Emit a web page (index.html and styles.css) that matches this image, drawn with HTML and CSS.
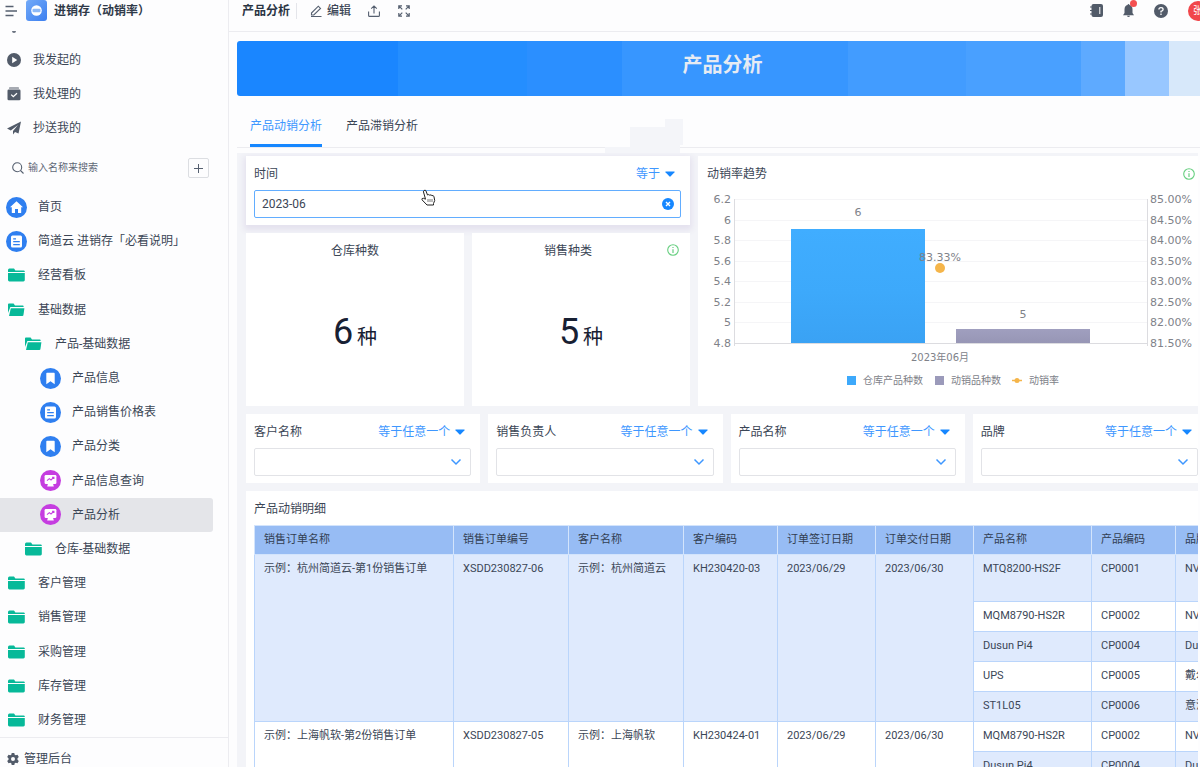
FILE: index.html
```html
<!DOCTYPE html>
<html lang="zh-CN">
<head>
<meta charset="utf-8">
<title>产品分析</title>
<link rel="stylesheet" href="styles.css">
</head>
<body>
<svg class="defs" aria-hidden="true">
  <symbol id="folder" viewBox="0 0 17 14"><path d="M0 2.2Q0 .6 1.4.6H6L7.4 2.4H15.6Q16.8 2.4 16.8 3.6V4H0Z"/><path d="M0 5H16.8V12Q16.8 13.4 15.4 13.4H1.4Q0 13.4 0 12Z"/></symbol>
  <symbol id="folder-open" viewBox="0 0 17 14"><path d="M0 1.4Q0 .6.9.6H5.6L7 2.4H14.8Q15.6 2.4 15.6 3.3V4H2.4L0 10Z"/><path d="M2.8 5.2H16.4L15.4 12.2Q15.2 13 14.4 13H1Z"/></symbol>
  <symbol id="bookmark" viewBox="0 0 21 21"><circle cx="10.500" cy="10.500" r="10.500"/><path fill="#fff" d="M6.300 5.500Q6.300 4.800 7 4.800H14Q14.700 4.800 14.700 5.500V16.300L10.500 13.200L6.300 16.300Z"/></symbol>
  <symbol id="doc" viewBox="0 0 21 21"><circle cx="10.500" cy="10.500" r="10.500"/><rect x="5" y="4.500" width="11" height="12" rx="1.500" fill="#fff"/><path stroke="#2f7ff0" stroke-width="1.200" d="M7.200 7.800H10M7.200 10.700H13.800M7.200 13.600H13.800"/></symbol>
  <symbol id="board" viewBox="0 0 21 21"><circle cx="10.500" cy="10.500" r="10.500"/><rect x="4.600" y="5" width="11.800" height="9" rx="1.300" fill="#fff"/><path fill="#fff" d="M8 13.500H13L13.800 16.500H7.200Z"/><path fill="none" stroke="#c53de0" stroke-width="1.100" d="M7 10.600L9.300 8.600L11 10L13.500 7.600M12 7.300H13.900V9"/></symbol>
  <symbol id="home" viewBox="0 0 21 21"><circle cx="10.500" cy="10.500" r="10.500"/><path fill="#fff" d="M10.500 4.300L17 10.300H15.200V15.500Q15.200 16 14.600 16H12V12H9V16H6.400Q5.800 16 5.800 15.500V10.300H4Z"/></symbol>
  <symbol id="chevron" viewBox="0 0 12 8"><path fill="none" stroke="#3e97ff" stroke-width="1.500" d="M1.500 1.500L6 6L10.500 1.500"/></symbol>
  <symbol id="caret" viewBox="0 0 10 6"><path fill="#1687ff" d="M.8.500H9.200Q10 .500 9.500 1.200L5.700 5.300Q5 6 4.300 5.300L.5 1.200Q0 .500.8.500Z"/></symbol>
  <symbol id="info" viewBox="0 0 12 12"><circle cx="6" cy="6" r="5.300" fill="none" stroke="#67cf80" stroke-width="1.100"/><path fill="none" stroke="#67cf80" stroke-width="1.200" d="M6 5.200V9M6 2.900V4.100"/></symbol>
</svg>
<div class="app">
  <aside class="sidebar">
    <header class="brand">
      <button class="icon-btn" aria-label="菜单"><svg width="13" height="12" viewBox="0 0 13 12" fill="none" stroke="#566070" stroke-width="1.400"><path d="M.5 1.500H8.500M.5 6H12M.5 10.500H8.500"/></svg></button>
      <svg class="brand-logo" width="21" height="21" viewBox="0 0 21 21"><defs><linearGradient id="lg" x1="0" y1="0" x2="1" y2="1"><stop offset="0" stop-color="#73aaf8"/><stop offset="1" stop-color="#3c7ff0"/></linearGradient></defs><rect width="21" height="21" rx="3" fill="url(#lg)"/><circle cx="10.500" cy="10.500" r="5.300" fill="#fff"/><rect x="6.500" y="8.800" width="8" height="3.400" rx="1" fill="#8db9f7"/></svg>
      <strong>进销存（动销率）</strong>
    </header>
    <nav class="quick">
      <span class="peek"></span>
      <a href="#"><svg width="14" height="14" viewBox="0 0 14 14"><circle cx="7" cy="7" r="7" fill="#525b69"/><path fill="#fff" d="M5.200 3.800L10.200 7L5.200 10.200Z"/></svg>我发起的</a>
      <a href="#"><svg width="14" height="14" viewBox="0 0 14 14"><path fill="#525b69" d="M2.500.500H11.500Q12 .500 12 1.500H2Q2 .500 2.500.500ZM1.800 2.500H12.200Q13.500 2.500 13.500 3.800V12Q13.500 13.300 12.200 13.300H1.800Q.5 13.300.5 12V3.800Q.5 2.500 1.800 2.500Z"/><path fill="none" stroke="#fff" stroke-width="1.300" d="M4.200 7.600L6.300 9.700L10 6.200"/></svg>我处理的</a>
      <a href="#"><svg width="14" height="14" viewBox="0 0 14 14"><path fill="#525b69" d="M14 .5L0 7.500L3.800 9.400L11 4L6 10V13.500L8 11L11.500 12.500Z"/></svg>抄送我的</a>
    </nav>
    <div class="search">
      <svg width="12" height="12" viewBox="0 0 12 12" fill="none" stroke="#566070" stroke-width="1.100"><circle cx="5.200" cy="5.200" r="4.500"/><path d="M8.500 8.500L11.500 11.500"/></svg>
      <input type="text" placeholder="输入名称来搜索" aria-label="搜索">
      <button aria-label="新增"><svg width="11" height="11" viewBox="0 0 11 11" stroke="#566070"><path d="M5.500 1V10M1 5.500H10"/></svg></button>
    </div>
    <nav class="tree">
      <a href="#"><svg class="round blue"><use href="#home"/></svg>首页</a>
      <a href="#"><svg class="round blue"><use href="#doc"/></svg>简道云 进销存「必看说明」</a>
      <a href="#"><svg class="fold"><use href="#folder"/></svg>经营看板</a>
      <a href="#"><svg class="fold"><use href="#folder-open"/></svg>基础数据</a>
      <a href="#" class="l2"><svg class="fold"><use href="#folder-open"/></svg>产品-基础数据</a>
      <a href="#" class="l3"><svg class="round blue"><use href="#bookmark"/></svg>产品信息</a>
      <a href="#" class="l3"><svg class="round blue"><use href="#doc"/></svg>产品销售价格表</a>
      <a href="#" class="l3"><svg class="round blue"><use href="#bookmark"/></svg>产品分类</a>
      <a href="#" class="l3"><svg class="round pink"><use href="#board"/></svg>产品信息查询</a>
      <a href="#" class="l3 current"><svg class="round pink"><use href="#board"/></svg>产品分析</a>
      <a href="#" class="l2"><svg class="fold"><use href="#folder"/></svg>仓库-基础数据</a>
      <a href="#"><svg class="fold"><use href="#folder"/></svg>客户管理</a>
      <a href="#"><svg class="fold"><use href="#folder"/></svg>销售管理</a>
      <a href="#"><svg class="fold"><use href="#folder"/></svg>采购管理</a>
      <a href="#"><svg class="fold"><use href="#folder"/></svg>库存管理</a>
      <a href="#"><svg class="fold"><use href="#folder"/></svg>财务管理</a>
    </nav>
    <footer class="admin"><a href="#"><svg width="12" height="12" viewBox="0 0 12 12"><path fill="#525b69" fill-rule="evenodd" d="M4.700 0H7.300L7.700 1.700L8.800 2.300L10.500 1.800L11.800 4L10.500 5.300V6.700L11.800 8L10.500 10.200L8.800 9.700L7.700 10.300L7.300 12H4.700L4.300 10.300L3.200 9.700L1.500 10.200L.2 8L1.500 6.700V5.300L.2 4L1.500 1.800L3.200 2.300L4.300 1.700ZM6 4A2 2 0 1 0 6 8A2 2 0 1 0 6 4Z"/></svg>管理后台</a></footer>
  </aside>

  <main class="main">
    <header class="topbar">
      <strong>产品分析</strong>
      <button class="edit"><svg width="12" height="12" viewBox="0 0 12 12" fill="none" stroke="#566070" stroke-width="1.100"><path d="M1.500 8L8.300 1.200L10.500 3.400L3.800 10H1.500ZM1 11.500H11.500"/></svg>编辑</button>
      <button class="icon-btn" aria-label="分享"><svg width="12" height="12" viewBox="0 0 12 12" fill="none" stroke="#566070" stroke-width="1.100"><path d="M6 8.500V1M3.200 3.600L6 .9L8.800 3.600M.6 6.500V10.400Q.6 11.400 1.600 11.400H10.400Q11.400 11.400 11.400 10.400V6.500"/></svg></button>
      <button class="icon-btn" aria-label="全屏"><svg width="12" height="12" viewBox="0 0 12 12" fill="none" stroke="#566070" stroke-width="1.200"><path d="M.8 4V.8H4M.8.8L4.300 4.300M8 .8H11.200V4M11.200.8L7.700 4.300M.8 8V11.200H4M.8 11.200L4.300 7.700M8 11.200H11.200V8M11.200 11.200L7.700 7.700"/></svg></button>
      <div class="tools">
        <button class="icon-btn" aria-label="通讯录"><svg width="13" height="13" viewBox="0 0 13 13"><rect x="1.500" width="11.500" height="13" rx="2" fill="#525b69"/><path stroke="#525b69" stroke-width="1.200" d="M0 3H2M0 6.500H2M0 10H2"/><path stroke="#fff" d="M9.800 3V10"/></svg></button>
        <button class="icon-btn bell" aria-label="通知"><svg width="11" height="13" viewBox="0 0 11 13"><path fill="#525b69" d="M5.500 0Q6.300 0 6.500 1Q9.500 1.800 9.500 5.500V9L11 11.300H0L1.500 9V5.500Q1.500 1.800 4.500 1Q4.700 0 5.500 0ZM4 11.800H7Q6.700 13 5.500 13Q4.300 13 4 11.800Z"/></svg><i></i></button>
        <button class="icon-btn" aria-label="帮助"><svg width="14" height="14" viewBox="0 0 14 14"><circle cx="7" cy="7" r="7" fill="#525b69"/><path fill="none" stroke="#fff" stroke-width="1.300" d="M4.900 5.500Q4.900 3.600 7 3.600Q9.100 3.600 9.100 5.400Q9.100 6.500 7 7.300V8.500M7 9.600V11"/></svg></button>
        <span class="avatar">张</span>
      </div>
    </header>
    <div class="page">
      <h1 class="banner">产品分析</h1>
      <div class="tabs">
        <a href="#" class="active">产品动销分析</a>
        <a href="#">产品滞销分析</a>
        <svg class="ghost" width="79" height="34" viewBox="0 0 79 34" fill="#f4f5f9"><path d="M25 8H60V0H78V26H75V34H0V28H25Z"/></svg>
      </div>
      <div class="dash">
        <div class="top-row">
          <div class="left-col">
            <section class="card filter focus">
              <div class="filter-head"><label for="time">时间</label><button>等于<svg width="10" height="6"><use href="#caret"/></svg></button></div>
              <div class="field"><input id="time" type="text" value="2023-06"><svg class="clear" width="12" height="12" viewBox="0 0 12 12"><circle cx="6" cy="6" r="6" fill="#1687ff"/><path stroke="#fff" stroke-width="1.400" d="M4 4L8 8M8 4L4 8"/></svg></div>
              <svg class="cursor" width="15" height="17" viewBox="0 0 15 17"><path fill="#fff" stroke="#222" d="M3 1.500Q4.500.5 5 2L6.500 6Q8 5 8.700 6.200Q10.200 5.300 10.900 6.600Q12.500 6 13 7.800L13.700 11.500L12.500 14.500V16H6L1 10.800Q.5 9 2.500 9.300L4.500 10.200L2.500 3Q2.300 2 3 1.500Z"/><path stroke="#555" stroke-width=".8" d="M7 10V13M9 10V13M11 10V13"/></svg>
            </section>
            <div class="stats">
              <section class="card stat"><h2>仓库种数</h2><p><b>6</b><span>种</span></p></section>
              <section class="card stat"><h2 class="with-info">销售种类</h2><svg class="info" width="12" height="12"><use href="#info"/></svg><p><b>5</b><span>种</span></p></section>
            </div>
          </div>
          <section class="card chart">
            <div class="chart-head"><h2>动销率趋势</h2><svg width="12" height="12"><use href="#info"/></svg></div>
            <svg class="plot" viewBox="0 0 509 220">
              <defs>
                <linearGradient id="b1" x1="0" y1="0" x2="0" y2="1"><stop offset="0" stop-color="#40adff"/><stop offset=".55" stop-color="#3da9fb"/><stop offset="1" stop-color="#3aa2f4"/></linearGradient>
                <linearGradient id="b2" x1="0" y1="0" x2="0" y2="1"><stop offset="0" stop-color="#a09fbf"/><stop offset="1" stop-color="#9796b5"/></linearGradient>
              </defs>
              <path stroke="#f5f5f7" d="M37 13.500H449M37 34.500H449M37 54.500H449M37 75.500H449M37 95.500H449M37 116.500H449M37 136.500H449"/>
              <path fill="none" stroke="#dcdce0" d="M36.500 13V160M449.500 13V160M37 157.500H449"/>
              <rect x="93" y="43" width="134" height="114" fill="url(#b1)"/>
              <rect x="258" y="143" width="134" height="14" fill="url(#b2)"/>
              <circle cx="242" cy="82" r="5" fill="#f5b54a"/>
              <g class="axis end"><text x="33" y="17">6.2</text><text x="33" y="38">6</text><text x="33" y="58">5.8</text><text x="33" y="79">5.6</text><text x="33" y="99">5.4</text><text x="33" y="120">5.2</text><text x="33" y="140">5</text><text x="33" y="161">4.8</text></g>
              <g class="axis"><text x="452" y="17">85.00%</text><text x="452" y="38">84.50%</text><text x="452" y="58">84.00%</text><text x="452" y="79">83.50%</text><text x="452" y="99">83.00%</text><text x="452" y="120">82.50%</text><text x="452" y="140">82.00%</text><text x="452" y="161">81.50%</text></g>
              <g class="axis mid"><text x="160" y="30">6</text><text x="325" y="132">5</text><text x="242" y="75">83.33%</text><text class="small" x="242" y="175">2023年06月</text></g>
              <g class="axis"><rect x="149" y="190" width="9" height="9" fill="#3da9fb"/><text class="small" x="165" y="198">仓库产品种数</text><rect x="237" y="190" width="9" height="9" fill="#9b9aba"/><text class="small" x="253" y="198">动销品种数</text><path stroke="#f5b54a" stroke-width="1.500" d="M314 194.500H324"/><circle cx="319" cy="194.500" r="2.500" fill="#f5b54a"/><text class="small" x="331" y="198">动销率</text></g>
            </svg>
          </section>
        </div>
        <div class="filters">
          <section class="card filter"><div class="filter-head"><label for="f1">客户名称</label><button>等于任意一个<svg width="10" height="6"><use href="#caret"/></svg></button></div><div class="field"><select id="f1"><option></option></select><svg class="chev" width="12" height="8"><use href="#chevron"/></svg></div></section>
          <section class="card filter"><div class="filter-head"><label for="f2">销售负责人</label><button>等于任意一个<svg width="10" height="6"><use href="#caret"/></svg></button></div><div class="field"><select id="f2"><option></option></select><svg class="chev" width="12" height="8"><use href="#chevron"/></svg></div></section>
          <section class="card filter"><div class="filter-head"><label for="f3">产品名称</label><button>等于任意一个<svg width="10" height="6"><use href="#caret"/></svg></button></div><div class="field"><select id="f3"><option></option></select><svg class="chev" width="12" height="8"><use href="#chevron"/></svg></div></section>
          <section class="card filter"><div class="filter-head"><label for="f4">品牌</label><button>等于任意一个<svg width="10" height="6"><use href="#caret"/></svg></button></div><div class="field"><select id="f4"><option></option></select><svg class="chev" width="12" height="8"><use href="#chevron"/></svg></div></section>
        </div>
        <section class="card detail">
          <h2>产品动销明细</h2>
          <div class="table-wrap">
          <table>
            <colgroup><col class="w-name"><col class="w-no"><col class="w-no"><col class="w-code"><col class="w-date"><col class="w-date"><col class="w-prod"><col class="w-pcode"><col class="w-brand"></colgroup>
            <thead><tr><th>销售订单名称</th><th>销售订单编号</th><th>客户名称</th><th>客户编码</th><th>订单签订日期</th><th>订单交付日期</th><th>产品名称</th><th>产品编码</th><th>品牌</th></tr></thead>
            <tbody>
              <tr class="tall odd"><td rowspan="5">示例：杭州简道云-第1份销售订单</td><td rowspan="5">XSDD230827-06</td><td rowspan="5">示例：杭州简道云</td><td rowspan="5">KH230420-03</td><td rowspan="5">2023/06/29</td><td rowspan="5">2023/06/30</td><td>MTQ8200-HS2F</td><td>CP0001</td><td>NVIDIA</td></tr>
              <tr><td>MQM8790-HS2R</td><td>CP0002</td><td>NVIDIA</td></tr>
              <tr class="odd"><td>Dusun Pi4</td><td>CP0004</td><td>Dusun</td></tr>
              <tr><td>UPS</td><td>CP0005</td><td>戴尔</td></tr>
              <tr class="odd"><td>ST1L05</td><td>CP0006</td><td>意法</td></tr>
              <tr><td rowspan="2">示例：上海帆软-第2份销售订单</td><td rowspan="2">XSDD230827-05</td><td rowspan="2">示例：上海帆软</td><td rowspan="2">KH230424-01</td><td rowspan="2">2023/06/29</td><td rowspan="2">2023/06/30</td><td>MQM8790-HS2R</td><td>CP0002</td><td>NVIDIA</td></tr>
              <tr class="odd"><td>Dusun Pi4</td><td>CP0004</td><td>Dusun</td></tr>
            </tbody>
          </table>
          </div>
        </section>
      </div>
    </div>
  </main>
</div>
</body>
</html>
```
FILE: styles.css
```css
* { box-sizing: border-box; }
body {
  margin: 0;
  font-family: Roboto, "Noto Sans CJK SC", sans-serif;
  font-size: 12px;
  line-height: 16px;
  color: #3b4656;
  background: #fdfdfe;
}
a { color: inherit; text-decoration: none; }
button {
  padding: 0;
  border: 0;
  background: none;
  font: inherit;
  color: inherit;
  cursor: pointer;
}
h1, h2, p { margin: 0; }
h2 { font-size: 12px; font-weight: 400; }
svg { flex: none; display: block; }
.defs { position: absolute; width: 0; height: 0; }
.icon-btn { display: flex; }

.app { display: flex; height: 100vh; overflow: hidden; }

/* Sidebar */
.sidebar {
  display: flex;
  flex-direction: column;
  flex: none;
  width: 229px;
  border-right: 1px solid #ececf0;
}
.brand {
  display: flex;
  align-items: center;
  height: 21px;
  padding-left: 5px;
  color: #2f3948;
}
.brand-logo { margin: 0 7px 0 8px; }
.quick { padding-top: 10px; }
.peek {
  display: block;
  width: 4px;
  height: 2px;
  margin: 0 0 10px 12px;
  border-radius: 0 0 2px 2px;
  background: #6a7280;
}
.quick a {
  display: flex;
  align-items: center;
  gap: 12px;
  height: 34px;
  padding-left: 7px;
}
.search {
  display: flex;
  align-items: center;
  height: 20px;
  margin: 13px 19px 12px 12px;
}
.search input {
  flex: 1;
  min-width: 0;
  padding: 0 4px;
  border: 0;
  outline: 0;
  background: none;
  font: inherit;
  font-size: 10px;
}
.search input::placeholder { color: #5f6877; }
.search button {
  display: grid;
  place-items: center;
  width: 21px;
  height: 20px;
  border: 1px solid #dcdee2;
  border-radius: 2px;
}
.tree { display: flex; flex-direction: column; flex: 1; min-height: 0; }
.tree a {
  display: flex;
  align-items: center;
  flex: 1;
  gap: 11px;
  padding-left: 6px;
  margin-right: 15px;
}
.tree .l2 { padding-left: 23px; }
.tree .l3 { padding-left: 40px; }
.tree .current { background: #e4e5e9; border-radius: 0 3px 3px 0; }
.round { width: 21px; height: 21px; }
.fold { width: 17px; height: 14px; margin: 0 2px; fill: #07b999; }
.blue { fill: #2f7ff0; }
.pink { fill: #c53de0; }
.admin { height: 30px; padding: 13px 0 0 7px; border-top: 1px solid #ececf0; overflow: hidden; }
.admin a { display: flex; align-items: center; gap: 5px; }

/* Top bar */
.main { flex: 1; min-width: 0; overflow: hidden; }
.topbar {
  display: flex;
  align-items: center;
  height: 32px;
  padding: 0 0 10px 13px;
  border-bottom: 1px solid #ececf0;
}
.topbar strong {
  padding-right: 6px;
  border-right: 1px solid #e4e5ea;
  color: #2a3443;
}
.edit { display: flex; align-items: center; gap: 5px; margin: 0 17px 0 13px; font-weight: 500; }
.topbar > .icon-btn { margin-right: 18px; }
.tools { display: flex; align-items: center; gap: 20px; margin: 0 -8px 0 auto; }
.bell { position: relative; }
.bell i {
  position: absolute;
  top: -4px;
  right: -3px;
  width: 7px;
  height: 7px;
  border-radius: 50%;
  background: #f44f50;
}
.avatar {
  width: 20px;
  height: 20px;
  border-radius: 50%;
  background: #f1474b;
  color: #fff;
  font-size: 10px;
  line-height: 20px;
  text-align: center;
}

/* Page */
.page { padding: 9px 0 0 8px; margin-right: -8px; }
.banner {
  height: 55px;
  padding-top: 12px;
  border-radius: 3px;
  background: linear-gradient(90deg,
    #1a86ff 16.6%, #248eff 16.6% 29.9%, #2b8fff 29.9% 39.7%,
    #3796ff 39.7% 62.9%, #429cff 62.9% 75.1%, #49a0ff 75.1% 86.9%,
    #5eaaff 86.9% 91.5%, #98c7ff 91.5% 96%, #d7e8fa 96%);
  color: #e6ebf3;
  font-size: 20px;
  font-weight: 700;
  line-height: 24px;
  text-align: center;
}
.tabs {
  position: relative;
  display: flex;
  gap: 24px;
  height: 52px;
  padding: 22px 0 0 13px;
  margin-bottom: 5px;
  border-bottom: 1px solid #ececf0;
}
.tabs a { position: relative; z-index: 1; height: 29px; }
.tabs .active { color: #3e97ff; border-bottom: 3px solid #1687ff; }
.ghost { position: absolute; left: 368px; top: 23px; }
.dash {
  display: flex;
  flex-direction: column;
  gap: 8px;
  padding: 3px 0 0 9px;
  margin-right: 10px;
  background: #f3f4f8;
  overflow: hidden;
}
.dash > * { margin-right: -9px; }
.card { background: #fff; }
.top-row { display: grid; grid-template-columns: 444fr 509fr; gap: 8px; }
.left-col { display: flex; flex-direction: column; gap: 8px; }
.filter { padding: 10px 9px 7px 8px; }
.focus { position: relative; box-shadow: 0 3px 6px 2px #e4e1ee; }
.filter-head { display: flex; justify-content: space-between; padding-right: 6px; }
.filter-head button { display: flex; align-items: center; gap: 5px; color: #3e97ff; }
.field { position: relative; margin-top: 8px; }
.field input, .field select {
  display: block;
  width: 100%;
  height: 28px;
  padding: 0 7px;
  border: 1px solid #e2e3e7;
  border-radius: 2px;
  outline: 0;
  appearance: none;
  background: #fff;
  font: inherit;
  color: inherit;
}
.field input { border-color: #62adff; }
.clear { position: absolute; top: 8px; right: 7px; }
.chev { position: absolute; top: 10px; right: 9px; pointer-events: none; }
.cursor { position: absolute; left: 175px; top: 33px; }
.stats { display: grid; grid-template-columns: 1fr 1fr; gap: 8px; flex: 1; }
.stat { position: relative; padding-top: 10px; text-align: center; }
.with-info { padding-right: 26px; }
.stat p {
  display: flex;
  align-items: baseline;
  justify-content: center;
  gap: 4px;
  padding-top: 53px;
  color: #172033;
  line-height: 40px;
}
.stat b { font-size: 36px; font-weight: 400; }
.stat span { font-size: 20px; }
.info { position: absolute; top: 11px; right: 11px; }
.chart-head { display: flex; justify-content: space-between; align-items: center; padding: 10px 12px 4px 9px; }
.plot { width: 100%; height: auto; }
.axis { font-family: "DejaVu Sans", "Noto Sans CJK SC", sans-serif; font-size: 11px; fill: #808289; }
.small { font-size: 10px; }
.end { text-anchor: end; }
.mid { text-anchor: middle; }
.filters { display: grid; grid-template-columns: repeat(4, 1fr); gap: 8px; }

/* Detail table */
.detail { padding: 10px 0 0 8px; }
.table-wrap { margin-top: 8px; overflow: hidden; }
table { width: 1100px; table-layout: fixed; border-collapse: collapse; font-size: 11px; }
.w-name { width: 199px; }
.w-no { width: 115px; }
.w-code { width: 94px; }
.w-date { width: 98px; }
.w-prod { width: 118px; }
.w-pcode { width: 84px; }
th, td { border: 1px solid #bad5fb; padding: 6px 9px; text-align: left; vertical-align: top; white-space: nowrap; }
th { height: 29px; background: #97bcf4; border-color: #d3e4fc; color: #323e52; font-weight: 400; }
td { height: 30px; background: #fff; }
.odd td { background: #dfeafd; }
.tall td { height: 47px; }
```
